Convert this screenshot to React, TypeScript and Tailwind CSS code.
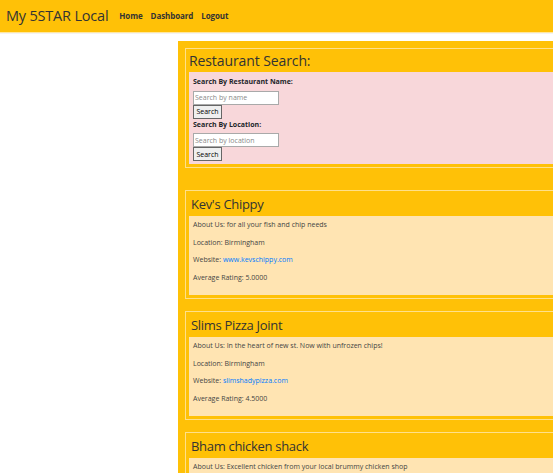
const restaurants = [
  {
    name: "Kev's Chippy",
    about: "for all your fish and chip needs",
    location: "Birmingham",
    website: "www.kevschippy.com",
    rating: "5.0000",
  },
  {
    name: "Slims Pizza Joint",
    about: "In the heart of new st. Now with unfrozen chips!",
    location: "Birmingham",
    website: "slimshadypizza.com",
    rating: "4.5000",
  },
  {
    name: "Bham chicken shack",
    about: "Excellent chicken from your local brummy chicken shop",
    location: "Birmingham",
    website: "bhamchickenshack.com",
    rating: "4.0000",
  },
]

function SearchField({ label, placeholder }: { label: string; placeholder: string }) {
  return (
    <div className="flex flex-col items-start">
      <label className="text-[7px] font-bold leading-[10.5px] mb-[3px] text-[#212529]">{label}</label>
      <input
        placeholder={placeholder}
        className="w-[86px] h-[14px] bg-white border border-[#a9a9a9] px-[1px] text-[7px] placeholder:text-[#8a8a8a] outline-none"
      />
      <button className="h-[14px] w-[29px] bg-[#efefef] border border-[#666] text-[7px] leading-none text-black">
        Search
      </button>
    </div>
  )
}

export default function App() {
  return (
    <div className="h-screen overflow-hidden bg-white font-['Open_Sans',sans-serif] text-[#333]">
      {/* Navbar */}
      <nav className="h-[33px] bg-[#ffc107] border-b border-[#ffe7a0] flex items-center px-[6px]">
        <span className="text-[14.5px] text-[#333] mr-[11px] tracking-[-0.2px]">My 5STAR Local</span>
        <div className="flex gap-[8px] text-[8px] font-bold text-[#333] tracking-[-0.1px]">
          <a>Home</a>
          <a>Dashboard</a>
          <a>Logout</a>
        </div>
      </nav>

      <div className="flex pt-[7px] border-t border-[#f3f3f3]">
        <div className="w-[178px] shrink-0" />
        <div className="w-[520px] shrink-0 bg-[#ffc107] p-[7px] flex flex-col">
          {/* Search card */}
          <div className="border border-[#ffe08a] px-[3px] pb-[3px]">
            <h2 className="text-[14px] leading-[18px] pt-[3px] pb-[2px] text-[#333] tracking-[-0.1px]">
              Restaurant Search:
            </h2>
            <div className="bg-[#f8d7da] px-[4px] pt-[5px] pb-[3px] flex flex-col gap-[1px]">
              <SearchField label="Search By Restaurant Name:" placeholder="Search by name" />
              <SearchField label="Search By Location:" placeholder="Search by location" />
            </div>
          </div>

          <div className="h-[22px]" />

          {/* Restaurant cards */}
          <div className="flex flex-col gap-[12px]">
            {restaurants.map((r) => (
              <div key={r.name} className="border border-[#ffe08a] px-[3px] pb-[3px]">
                <h3 className="text-[13px] leading-[17px] pt-[5px] pb-[3px] px-[2px] text-[#333] tracking-[-0.3px]">
                  {r.name}
                </h3>
                <div className="bg-[#ffe4b2] px-[4px] pt-[4px] pb-[5px] text-[7px] leading-[10.5px] text-[#444]">
                  <p className="mb-[7px]">About Us: {r.about}</p>
                  <p className="mb-[7px]">Location: {r.location}</p>
                  <p className="mb-[7px]">
                    Website: <a className="text-[#007bff]">{r.website}</a>
                  </p>
                  <p className="mb-[7px]">Average Rating: {r.rating}</p>
                </div>
              </div>
            ))}
          </div>
        </div>
      </div>
    </div>
  )
}
